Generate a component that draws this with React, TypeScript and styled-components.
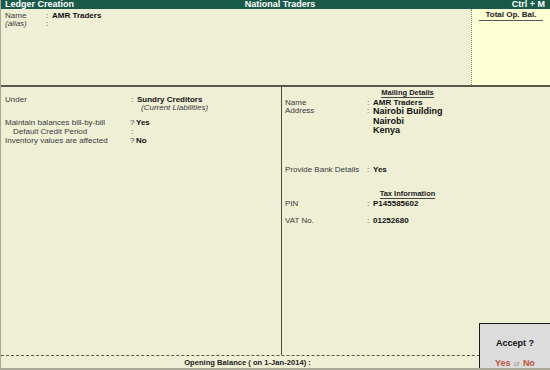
import React from 'react'
import styled, { createGlobalStyle } from 'styled-components'

const GlobalStyle = createGlobalStyle`
  html, body {
    margin: 0;
    padding: 0;
    background: #efefd6;
  }
  *, *::before, *::after {
    box-sizing: border-box;
  }
`

const Screen = styled.div`
  position: relative;
  width: 550px;
  height: 370px;
  display: flex;
  flex-direction: column;
  background: #efefd6;
  font-family: 'Liberation Sans', Arial, sans-serif;
  font-size: 8px;
  color: #3a3a3a;
  border-left: 1px solid #a8a894;
  border-bottom: 2px solid #a8a894;
  overflow: hidden;
`

const TitleBar = styled.div`
  height: 9px;
  flex: none;
  display: grid;
  grid-template-columns: 1fr auto 1fr;
  align-items: center;
  padding: 0 5px 0 4px;
  background: #1a5a49;
  color: #fff;
  font-weight: bold;
  font-size: 9px;
  line-height: 9px;
`

const TitleCenter = styled.span`
  padding-left: 10px;
`

const TitleRight = styled.span`
  justify-self: end;
`

const TopPanel = styled.div`
  height: 76px;
  flex: none;
  display: flex;
`

const TopFields = styled.div`
  flex: 1;
  padding: 3px 4px;
`

const TotalBox = styled.div`
  width: 79px;
  background: #ffffd6;
  border-left: 1px dotted #8a8a78;
  display: flex;
  flex-direction: column;
  align-items: center;
  padding-top: 2px;
`

const TotalHead = styled.div`
  width: 64px;
  text-align: center;
  font-weight: bold;
  color: #222;
  border-bottom: 1px solid #555;
  line-height: 8px;
  padding-bottom: 1px;
`

const Rule = styled.div`
  height: 2px;
  flex: none;
  background: #5a5a4a;
`

const Middle = styled.div`
  flex: 1;
  display: flex;
`

const LeftColumn = styled.div`
  width: 280px;
  flex: none;
  padding: 9px 4px;
`

const RightColumn = styled.div`
  flex: 1;
  padding: 2px 20px 2px 3px;
`

const Divider = styled.div`
  width: 1px;
  background: #4a4a40;
`

const Row = styled.div<{ $gap?: number }>`
  display: flex;
  line-height: 8px;
  margin-top: ${({ $gap }) => $gap ?? 0}px;
`

const Label = styled.span<{ $w: number; $italic?: boolean; $indent?: number }>`
  width: ${({ $w }) => $w}px;
  flex: none;
  font-style: ${({ $italic }) => ($italic ? 'italic' : 'normal')};
  padding-left: ${({ $indent }) => $indent ?? 0}px;
`

const Sep = styled.span`
  width: 6px;
  flex: none;
`

const Value = styled.span<{ $big?: boolean }>`
  font-weight: bold;
  color: #111;
  font-size: ${({ $big }) => ($big ? 9 : 8)}px;
  line-height: ${({ $big }) => ($big ? 9 : 8)}px;
  white-space: nowrap;
`

const Note = styled.span`
  font-style: italic;
  padding-left: 4px;
`

const Heading = styled.div<{ $gap?: number }>`
  margin-top: ${({ $gap }) => $gap ?? 0}px;
  text-align: center;
  line-height: 8px;
  font-size: 7.5px;
  span {
    font-weight: bold;
    color: #222;
    border-bottom: 1px solid #444;
  }
`

const Footer = styled.div`
  height: 13px;
  flex: none;
  border-top: 1px dashed #5a5a4a;
  display: flex;
  justify-content: center;
  align-items: center;
  padding-right: 56px;
  font-weight: bold;
  font-size: 7.6px;
  color: #222;
`

const AcceptBox = styled.div`
  position: absolute;
  right: 0;
  bottom: 0;
  width: 71px;
  height: 45px;
  background: #dcdcdc;
  border: 1px solid #1a1a1a;
  border-right: none;
  border-bottom: none;
  display: flex;
  flex-direction: column;
  align-items: center;
  justify-content: space-between;
  padding: 14px 0 0;
  font-weight: bold;
  color: #111;
  font-size: 9px;
`

const Choice = styled.div`
  color: #c0503a;
  font-size: 9px;
  em {
    font-style: normal;
    font-weight: normal;
    color: #9a9a90;
    font-size: 7px;
    margin: 0 3px;
  }
`

export default function App() {
  return (
    <>
      <GlobalStyle />
      <Screen>
        <TitleBar>
          <span>Ledger Creation</span>
          <TitleCenter>National Traders</TitleCenter>
          <TitleRight>Ctrl + M</TitleRight>
        </TitleBar>
        <TopPanel>
          <TopFields>
            <Row>
              <Label $w={41}>Name</Label>
              <Sep>:</Sep>
              <Value>AMR Traders</Value>
            </Row>
            <Row>
              <Label $w={41} $italic>(alias)</Label>
              <Sep>:</Sep>
            </Row>
          </TopFields>
          <TotalBox>
            <TotalHead>Total Op. Bal.</TotalHead>
          </TotalBox>
        </TopPanel>
        <Rule />
        <Middle>
          <LeftColumn>
            <Row>
              <Label $w={126}>Under</Label>
              <Sep>:</Sep>
              <Value>Sundry Creditors</Value>
            </Row>
            <Row>
              <Label $w={132} />
              <Note>(Current Liabilities)</Note>
            </Row>
            <Row $gap={7}>
              <Label $w={125}>Maintain balances bill-by-bill</Label>
              <Sep>?</Sep>
              <Value>Yes</Value>
            </Row>
            <Row $gap={1}>
              <Label $w={126} $indent={8}>Default Credit Period</Label>
              <Sep>:</Sep>
            </Row>
            <Row $gap={1}>
              <Label $w={125}>Inventory values are affected</Label>
              <Sep>?</Sep>
              <Value>No</Value>
            </Row>
          </LeftColumn>
          <Divider />
          <RightColumn>
            <Heading>
              <span>Mailing Details</span>
            </Heading>
            <Row $gap={2}>
              <Label $w={82}>Name</Label>
              <Sep>:</Sep>
              <Value>AMR Traders</Value>
            </Row>
            <Row>
              <Label $w={82}>Address</Label>
              <Sep>:</Sep>
              <Value $big>Nairobi Building</Value>
            </Row>
            <Row $gap={1}>
              <Label $w={88} />
              <Value $big>Nairobi</Value>
            </Row>
            <Row>
              <Label $w={88} />
              <Value $big>Kenya</Value>
            </Row>
            <Row $gap={31}>
              <Label $w={82}>Provide Bank Details</Label>
              <Sep>:</Sep>
              <Value>Yes</Value>
            </Row>
            <Heading $gap={16}>
              <span>Tax Information</span>
            </Heading>
            <Row $gap={2}>
              <Label $w={82}>PIN</Label>
              <Sep>:</Sep>
              <Value>P145585602</Value>
            </Row>
            <Row $gap={9}>
              <Label $w={82}>VAT No.</Label>
              <Sep>:</Sep>
              <Value>01252680</Value>
            </Row>
          </RightColumn>
        </Middle>
        <Footer>Opening Balance ( on 1-Jan-2014) :</Footer>
        <AcceptBox>
          <div>Accept ?</div>
          <Choice>
            Yes<em>or</em>No
          </Choice>
        </AcceptBox>
      </Screen>
    </>
  )
}
